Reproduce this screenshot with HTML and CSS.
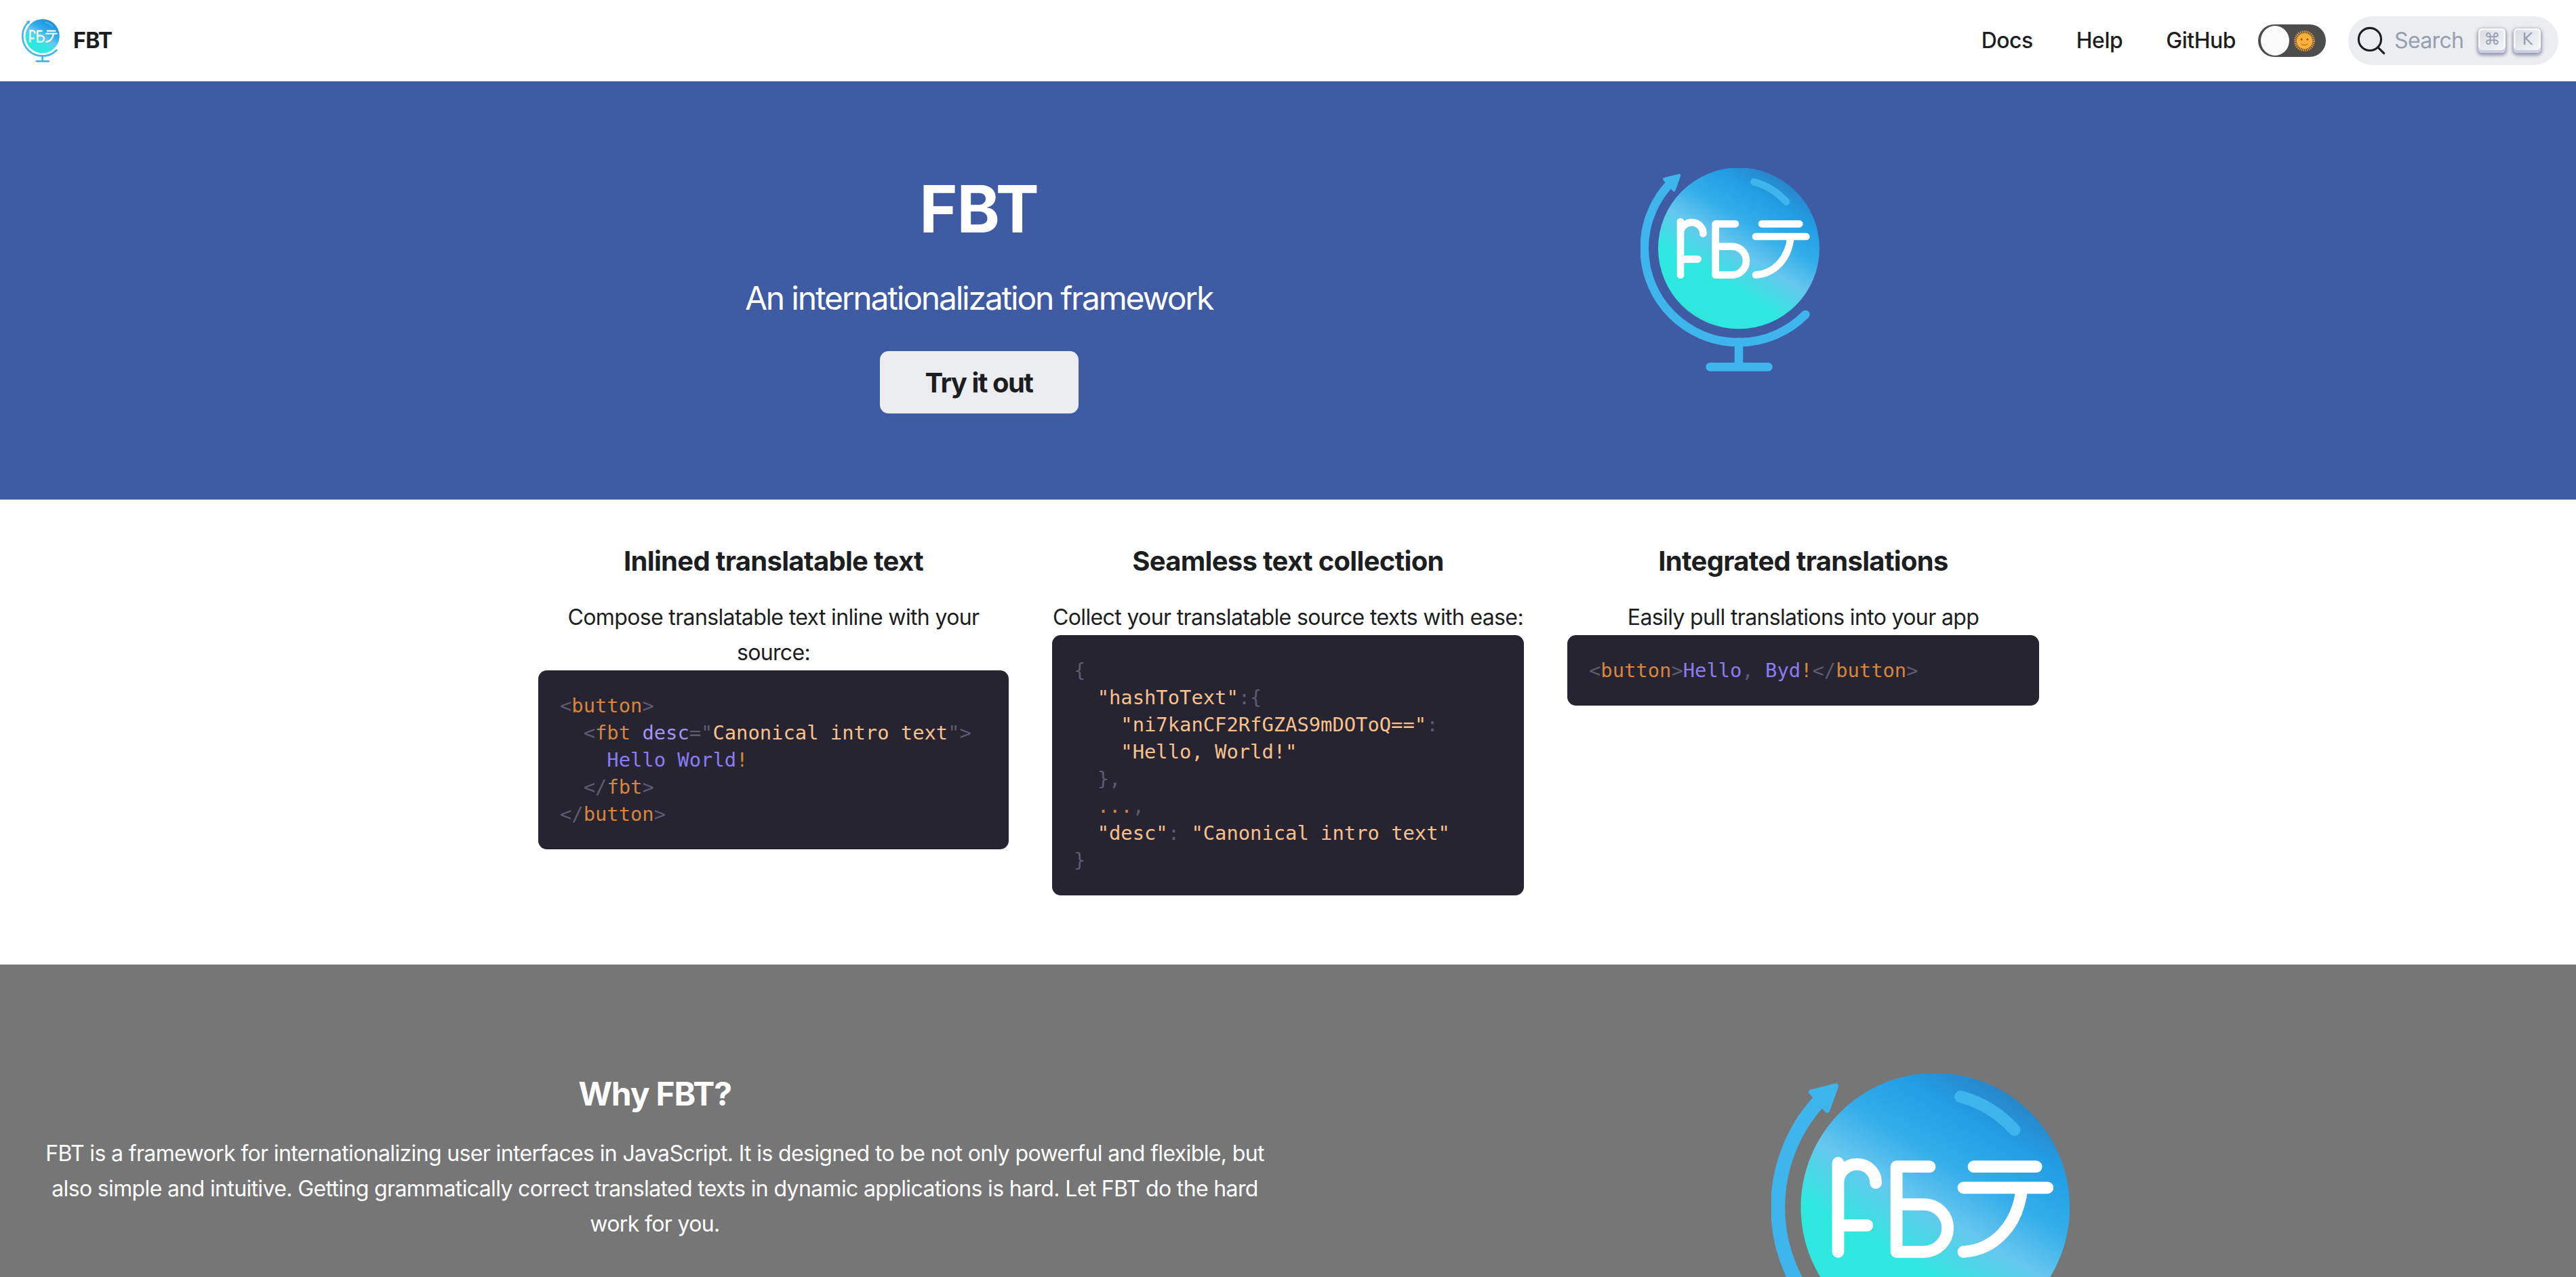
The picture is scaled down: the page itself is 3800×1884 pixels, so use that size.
FILE: index.html
```html
<!DOCTYPE html>
<html lang="en">
<head>
  <meta charset="UTF-8">
  <title>FBT</title>
  <link rel="stylesheet" href="styles.css">
</head>
<body>
  <div class="page">
    <nav class="navbar">
      <a class="brand">
        <svg class="brand-logo" viewBox="120 85 795 900">
          <defs>
            <linearGradient id="globe-fill" gradientUnits="userSpaceOnUse" x1="760" y1="110" x2="350" y2="790">
              <stop offset="0" stop-color="#2a7fc2"/>
              <stop offset="0.18" stop-color="#229fe5"/>
              <stop offset="0.34" stop-color="#33aeea"/>
              <stop offset="0.5" stop-color="#66c6ee"/>
              <stop offset="0.7" stop-color="#2ee8e0"/>
              <stop offset="0.9" stop-color="#2ee8e0"/>
              <stop offset="1" stop-color="#33d8c8"/>
            </linearGradient>
            <g id="fbt-mark">
              <circle cx="555" cy="440" r="357" fill="url(#globe-fill)"/>
              <g fill="none" stroke="#3fb5ee" stroke-linecap="round" stroke-linejoin="round">
                <path stroke-width="38" d="M258 146 A 416 416 0 1 0 850 733"/>
                <path stroke-width="38" d="M555 855 V965 M428 965 H685"/>
                <path stroke-width="32" d="M622 146 A 298 298 0 0 1 765 234"/>
              </g>
              <path fill="#3fb5ee" stroke="#3fb5ee" stroke-width="14" stroke-linejoin="round" d="M226 134 L291 118 L268 182 Z"/>
              <g fill="none" stroke="#fff" stroke-width="32" stroke-linecap="round" stroke-linejoin="round">
                <path d="M297 322 V558 M297 488 H374 M297 372 A 50 48 0 0 1 397 375"/>
                <path d="M540 332 H452 V558 H525 A 63 63 0 0 0 525 432 H452"/>
                <path d="M657 332 H823 M630 388 H853 M785 388 C 775 490 710 553 630 558"/>
              </g>
            </g>
          </defs>
          <use href="#fbt-mark"/>
        </svg>
        <b class="brand-name">FBT</b>
      </a>
      <div class="nav-links">
        <a>Docs</a>
        <a>Help</a>
        <a>GitHub</a>
      </div>
      <div class="toggle">
        <span class="toggle-thumb"></span>
        <svg class="toggle-sun" viewBox="0 0 32 32">
          <circle cx="16" cy="16" r="14" fill="none" stroke="#f5a623" stroke-width="4" stroke-dasharray="1.4 1.4"/>
          <circle cx="16" cy="16" r="12" fill="#fbb03b"/>
          <circle cx="11.5" cy="13.5" r="1.6" fill="#8a5a1c"/>
          <circle cx="20.5" cy="13.5" r="1.6" fill="#8a5a1c"/>
          <path d="M11.5 20.5 Q16 24 20.5 20.5" fill="none" stroke="#c67a1e" stroke-width="1.4" stroke-linecap="round"/>
        </svg>
      </div>
      <div class="search">
        <svg class="search-icon" viewBox="0 0 20 20">
          <path d="M14.386 14.386l4.0877 4.0877-4.0877-4.0877c-2.9418 2.9419-7.7115 2.9419-10.6533 0-2.9419-2.9418-2.9419-7.7115 0-10.6533 2.9418-2.9419 7.7115-2.9419 10.6533 0 2.9419 2.9418 2.9419 7.7115 0 10.6533z" fill="none" stroke="#1c1e21" stroke-width="1.4" stroke-linecap="round" stroke-linejoin="round"/>
        </svg>
        <span class="search-label">Search</span>
        <span class="search-keys">
          <kbd class="key">⌘</kbd>
          <kbd class="key">K</kbd>
        </span>
      </div>
    </nav>

    <header class="hero">
      <div class="hero-inner">
        <div class="hero-text">
          <h1 class="hero-title">FBT</h1>
          <p class="hero-subtitle">An internationalization framework</p>
          <a class="hero-button">Try it out</a>
        </div>
        <svg class="hero-logo" viewBox="120 85 795 900"><use href="#fbt-mark"/></svg>
      </div>
    </header>

    <section class="features">
      <div class="feature">
        <h3>Inlined translatable text</h3>
        <p>Compose translatable text inline with your source:</p>
<pre class="code"><span class="p">&lt;</span><span class="t">button</span><span class="p">&gt;</span>
  <span class="p">&lt;</span><span class="t">fbt</span> <span class="a">desc</span><span class="p">="</span><span class="s">Canonical intro text</span><span class="p">"&gt;</span>
    Hello World<span class="t">!</span>
  <span class="p">&lt;/</span><span class="t">fbt</span><span class="p">&gt;</span>
<span class="p">&lt;/</span><span class="t">button</span><span class="p">&gt;</span></pre>
      </div>
      <div class="feature">
        <h3>Seamless text collection</h3>
        <p>Collect your translatable source texts with ease:</p>
<pre class="code"><span class="p">{</span>
  <span class="s">"hashToText"</span><span class="p">:{</span>
    <span class="s">"ni7kanCF2RfGZAS9mDOToQ=="</span><span class="p">:</span>
    <span class="s">"Hello, World!"</span>
  <span class="p">},</span>
  <span class="t">...</span><span class="p">,</span>
  <span class="s">"desc"</span><span class="p">:</span> <span class="s">"Canonical intro text"</span>
<span class="p">}</span></pre>
      </div>
      <div class="feature">
        <h3>Integrated translations</h3>
        <p>Easily pull translations into your app</p>
<pre class="code"><span class="p">&lt;</span><span class="t">button</span><span class="p">&gt;</span>Hello<span class="p">,</span> Byd<span class="t">!</span><span class="p">&lt;/</span><span class="t">button</span><span class="p">&gt;</span></pre>
      </div>
    </section>

    <section class="why">
      <div class="why-text">
        <h2>Why FBT?</h2>
        <p>FBT is a framework for internationalizing user interfaces in JavaScript. It is designed to be not only powerful and flexible, but also simple and intuitive. Getting grammatically correct translated texts in dynamic applications is hard. Let FBT do the hard work for you.</p>
      </div>
      <div class="why-art">
        <svg class="why-logo" viewBox="120 85 795 900"><use href="#fbt-mark"/></svg>
      </div>
    </section>
  </div>
</body>
</html>
```

FILE: styles.css
```css
* {
  box-sizing: border-box;
}
html, body {
  margin: 0;
}
body {
  font-family: Inter, 'Noto Sans', sans-serif;
  font-size: 32px;
  line-height: 52px;
  letter-spacing: -0.64px;
  color: #1c1e21;
  background-color: #fff;
}
.page {
  height: 100vh;
  overflow: hidden;
}

/* top bar */
.navbar {
  display: flex;
  align-items: center;
  height: 120px;
  padding: 0 26px 0 32px;
}
.brand {
  display: flex;
  align-items: center;
  gap: 20px;
  margin-right: auto;
}
.brand-logo {
  width: 56px;
  height: 64px;
}
.brand-name {
  font-weight: 700;
  line-height: 1;
}
.nav-links {
  display: flex;
  gap: 64px;
  font-weight: 500;
  letter-spacing: -0.5px;
}
.toggle {
  display: flex;
  align-items: center;
  justify-content: space-between;
  width: 100px;
  height: 48px;
  margin-left: 33px;
  padding: 2px 16px 2px 4px;
  border-radius: 24px;
  background-color: #4d4d4d;
}
.toggle-thumb {
  width: 42px;
  height: 44px;
  border-radius: 50%;
  background-color: #fafafa;
}
.toggle-sun {
  width: 31px;
  height: 31px;
}
.search {
  display: flex;
  align-items: center;
  width: 310px;
  height: 72px;
  margin-left: 33px;
  padding: 0 26px 0 12px;
  border-radius: 40px;
  background-color: #ebedf0;
}
.search-icon {
  width: 44px;
  height: 44px;
  flex: none;
}
.search-label {
  margin-left: 12px;
  color: #969faf;
}
.search-keys {
  display: flex;
  gap: 12px;
  margin-left: auto;
}
.key {
  display: flex;
  align-items: center;
  justify-content: center;
  width: 40px;
  height: 36px;
  padding-bottom: 4px;
  border-radius: 6px;
  font-family: 'DejaVu Sans', sans-serif;
  font-size: 24px;
  line-height: 1;
  color: #969faf;
  background: linear-gradient(-225deg, #d5dbe4, #f8f8f8);
  box-shadow: inset 0 -4px 0 0 #cdcde6, inset 0 0 2px 2px #fff, 0 2px 4px 2px rgba(30,35,90,.4);
}

/* hero */
.hero {
  height: 617px;
  padding-top: 128px;
  background-color: #3e5ba4;
  color: #fff;
}
.hero-inner {
  display: grid;
  grid-template-columns: 1368px 1fr;
  width: 2280px;
  margin: 0 auto;
}
.hero-text {
  text-align: center;
}
.hero-title {
  margin: 0 0 32px;
  font-size: 96px;
  font-weight: 700;
  line-height: 120px;
  letter-spacing: -1px;
}
.hero-subtitle {
  margin: 0 0 38px;
  font-size: 48px;
  line-height: 80px;
  letter-spacing: -2.2px;
}
.hero-button {
  display: inline-block;
  width: 293px;
  height: 92px;
  border-radius: 12.8px;
  background-color: #ebedf0;
  color: #1c1e21;
  font-size: 40px;
  font-weight: 700;
  line-height: 94px;
  letter-spacing: -1.5px;
}
.hero-logo {
  width: 265px;
  height: 300px;
  margin-left: 292px;
}

/* feature columns */
.features {
  display: grid;
  grid-template-columns: repeat(3, 760px);
  justify-content: center;
  height: 686px;
  padding-top: 66px;
}
.feature {
  padding: 0 32px;
  text-align: center;
}
.feature:first-child {
  padding-left: 34px;
}
.feature h3 {
  margin: 0 0 32px;
  font-size: 40px;
  font-weight: 700;
  line-height: 50px;
  letter-spacing: -0.7px;
}
.feature p {
  margin: 0;
}
.code {
  margin: 0;
  padding: 32px;
  border-radius: 12.8px;
  background-color: #262430;
  color: #8b7cf3;
  font-family: 'DejaVu Sans Mono', monospace;
  font-size: 28.8px;
  line-height: 40px;
  letter-spacing: 0;
  text-align: left;
}
.code .p { color: #5f5b73; }
.code .t { color: #d9853d; }
.code .a { color: #a295f5; }
.code .s { color: #f9c18d; }

/* why section */
.why {
  display: grid;
  grid-template-columns: 1fr 1fr;
  height: 700px;
  padding: 161px 32px 0;
  background-color: #767676;
  color: #fff;
}
.why-text {
  padding: 0 32px;
  text-align: center;
}
.why-text h2 {
  margin: 0 0 32px;
  font-size: 48px;
  font-weight: 700;
  line-height: 60px;
  letter-spacing: -1.2px;
}
.why-text p {
  margin: 0;
}
.why-art {
  display: flex;
  justify-content: center;
}
.why-logo {
  width: 442px;
  height: 500px;
}
```
